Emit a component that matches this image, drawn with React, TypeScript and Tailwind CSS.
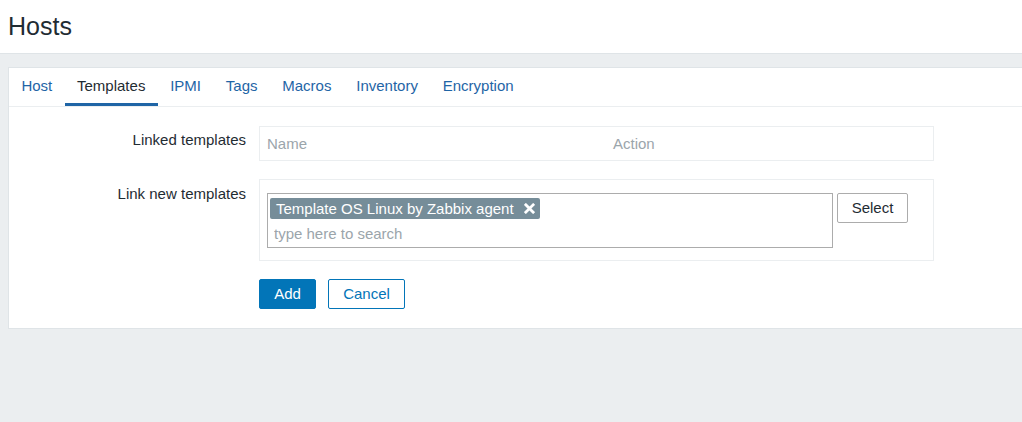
import { useState } from "react";

const tabs = ["Host", "Templates", "IPMI", "Tags", "Macros", "Inventory", "Encryption"];

const App = () => {
    const [activeTab, setActiveTab] = useState("Templates");
    const [search, setSearch] = useState("");
    const [chips, setChips] = useState(["Template OS Linux by Zabbix agent"]);

    return (
        <div
            className="min-h-[422px] bg-[#ebeef0] text-[15px] text-[#1f2c33]"
            style={{ fontFamily: '"Liberation Sans", Arial, sans-serif' }}
        >
            {/* Header */}
            <header className="h-[54px] bg-white border-b border-[#dfe4e7] pl-2 pt-[11px]">
                <h1 className="text-[25px] leading-[30px] text-[#1f2c33]">Hosts</h1>
            </header>

            {/* Card */}
            <div className="pt-[13px] pl-2">
                <div className="bg-white border border-r-0 border-[#dfe4e7] pb-[19px]">
                    {/* Tabs */}
                    <div className="flex h-[39px] border-b border-[#ebeef0] pl-0">
                        {tabs.map((tab) => (
                            <button
                                key={tab}
                                onClick={() => setActiveTab(tab)}
                                className={`h-full px-[12.4px] border-b-[3px] ${
                                    activeTab === tab
                                        ? "border-[#1f65a6] text-[#1f2c33]"
                                        : "border-transparent text-[#1f65a6]"
                                }`}
                            >
                                <span className="relative top-[1px]">{tab}</span>
                            </button>
                        ))}
                    </div>

                    {/* Form */}
                    <div className="pt-[19px] flex flex-col gap-[18px]">
                        {/* Linked templates */}
                        <div className="flex">
                            <div className="w-[237px] text-right pt-[5px] leading-[18px]">Linked templates</div>
                            <div className="ml-[13px] w-[675px] h-[35px] border border-[#ebeef0] flex items-center text-[#9ba5ab]">
                                <span className="pl-[7px] w-[353px] pt-[2px]">Name</span>
                                <span className="pt-[2px]">Action</span>
                            </div>
                        </div>

                        {/* Link new templates */}
                        <div className="flex">
                            <div className="w-[237px] text-right pt-[6px] leading-[18px]">Link new templates</div>
                            <div className="ml-[13px] w-[675px] h-[82px] border border-[#ebeef0] pt-[13px] pl-[7px] flex items-start gap-[4px]">
                                <div className="w-[566px] h-[55px] border border-[#acacac] px-[2px] pt-[4px]">
                                    <div className="flex flex-wrap gap-1">
                                        {chips.map((chip) => (
                                            <span
                                                key={chip}
                                                className="h-[21px] bg-[#768d99] text-white rounded-[2px] pl-[6px] pr-[5px] flex items-center gap-[10px] leading-none"
                                            >
                                                {chip}
                                                <button
                                                    onClick={() => setChips(chips.filter((c) => c !== chip))}
                                                    className="flex items-center"
                                                >
                                                    <svg width="11" height="11" viewBox="0 0 12 12">
                                                        <path
                                                            d="M2 2 L10 10 M10 2 L2 10"
                                                            stroke="#ffffff"
                                                            strokeWidth="3"
                                                            strokeLinecap="square"
                                                        />
                                                    </svg>
                                                </button>
                                            </span>
                                        ))}
                                    </div>
                                    <input
                                        className="w-full outline-none pl-[4px] mt-[4px] h-[22px] placeholder:text-[#9ba5ab] text-[15px]"
                                        placeholder="type here to search"
                                        value={search}
                                        onChange={(event) => setSearch(event.target.value)}
                                    />
                                </div>
                                <button className="w-[71px] h-[30px] border border-[#acacac] rounded-[2px] bg-white text-[#1f2c33]">
                                    Select
                                </button>
                            </div>
                        </div>

                        {/* Buttons */}
                        <div className="flex pl-[250px] gap-[12px]">
                            <button className="w-[57px] h-[30px] bg-[#0275b8] text-white rounded-[2px] border border-[#0275b8]">
                                Add
                            </button>
                            <button className="w-[77px] h-[30px] bg-white text-[#0275b8] rounded-[2px] border border-[#0275b8]">
                                Cancel
                            </button>
                        </div>
                    </div>
                </div>
            </div>
        </div>
    );
};

export default App;
